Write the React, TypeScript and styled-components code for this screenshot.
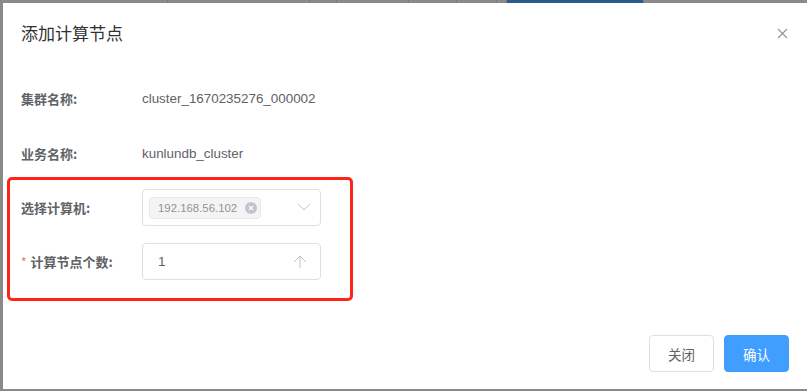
import React from "react";
import styled, { createGlobalStyle } from "styled-components";

const GlobalStyle = createGlobalStyle`
  html, body {
    margin: 0;
    padding: 0;
    background: #8a8a8a;
    font-family: "Liberation Sans", "Noto Sans CJK SC", sans-serif;
  }
`;

const Page = styled.div`
  position: relative;
  width: 807px;
  height: 391px;
  overflow: hidden;
  background: #8a8a8a;
`;

/* the page behind the overlay, only a thin strip of it shows */
const BackBar = styled.div`
  display: flex;
  height: 3px;
  padding-left: 167px;
`;

const BackCell = styled.div<{ $w: number; $active?: boolean }>`
  width: ${(p) => p.$w}px;
  height: 100%;
  border-left: 1px solid #7a7a7a;
  background: ${(p) => (p.$active ? "#2b5a8d" : "transparent")};
`;

const Dialog = styled.div`
  position: absolute;
  top: 3px;
  left: 3px;
  width: 806px;
  height: 386px;
  background: #fff;
  display: flex;
  flex-direction: column;
`;

const Header = styled.div`
  display: flex;
  align-items: center;
  justify-content: space-between;
  padding: 18px 21px 0 18px;
  height: 24px;
`;

const Title = styled.span`
  font-family: "Noto Sans CJK SC", sans-serif;
  font-size: 17px;
  line-height: 24px;
  color: #303133;
`;

const CloseBtn = styled.button`
  border: 0;
  background: none;
  padding: 0;
  width: 12px;
  height: 12px;
  display: flex;
  align-items: center;
  justify-content: center;
  cursor: pointer;
`;

const Body = styled.div`
  padding: 35px 20px 0 18px;
  display: flex;
  flex-direction: column;
  gap: 17.5px;
`;

const Group = styled.div`
  position: relative;
  display: flex;
  flex-direction: column;
  gap: 17px;

  &::after {
    content: "";
    position: absolute;
    top: -12px;
    left: -14px;
    width: 340px;
    height: 118px;
    border: 3px solid #ff2418;
    border-radius: 5px;
    pointer-events: none;
  }
`;

const Row = styled.div`
  display: flex;
  align-items: center;
  height: 37px;
`;

const Label = styled.label`
  width: 121px;
  flex-shrink: 0;
  font-family: "Noto Sans CJK SC", sans-serif;
  font-weight: 700;
  font-size: 13px;
  color: #606266;
  display: flex;
  align-items: center;
`;

const Star = styled.span`
  color: #f56c6c;
  font-weight: 400;
  margin-right: 4px;
  font-size: 12px;
`;

const Value = styled.span`
  font-size: 13.4px;
  color: #606266;
`;

const Field = styled.div`
  box-sizing: border-box;
  width: 179px;
  height: 37px;
  border: 1px solid #dcdfe6;
  border-radius: 4px;
  display: flex;
  align-items: center;
  padding: ${(p: { $pad: string }) => p.$pad};
`;

const Tag = styled.span`
  box-sizing: border-box;
  height: 22px;
  display: flex;
  align-items: center;
  gap: 8px;
  padding: 0 3px 0 8px;
  background: #f4f4f5;
  border: 1px solid #e9e9eb;
  border-radius: 4px;
  color: #909399;
  font-size: 11.4px;
`;

const TagClose = styled.span`
  width: 12px;
  height: 12px;
  border-radius: 50%;
  background: #c0c4cc;
  display: flex;
  align-items: center;
  justify-content: center;
`;

const Suffix = styled.span`
  margin-left: auto;
  display: flex;
  align-items: center;
`;

const InputText = styled.span`
  font-size: 13.5px;
  color: #606266;
`;

const Footer = styled.div`
  margin-top: auto;
  display: flex;
  justify-content: flex-end;
  gap: 10px;
  padding: 0 20px 17px;
`;

const Button = styled.button<{ $primary?: boolean }>`
  box-sizing: border-box;
  width: 65px;
  height: 37px;
  border-radius: 4px;
  border: 1px solid ${(p) => (p.$primary ? "#409eff" : "#dcdfe6")};
  background: ${(p) => (p.$primary ? "#409eff" : "#fff")};
  color: ${(p) => (p.$primary ? "#fff" : "#606266")};
  font-family: "Noto Sans CJK SC", sans-serif;
  font-size: 13.5px;
  cursor: pointer;
`;

export default function App() {
  return (
    <Page>
      <GlobalStyle />
      <BackBar>
        <BackCell $w={141} />
        <BackCell $w={26} />
        <BackCell $w={71} />
        <BackCell $w={47} />
        <BackCell $w={39} />
        <BackCell $w={9} />
        <BackCell $w={136} $active />
        <BackCell $w={100} />
      </BackBar>

      <Dialog>
        <Header>
          <Title>添加计算节点</Title>
          <CloseBtn aria-label="close">
            <svg width="11" height="11" viewBox="0 0 11 11">
              <path d="M1 1L10 10M10 1L1 10" stroke="#909399" strokeWidth="1.1" fill="none" />
            </svg>
          </CloseBtn>
        </Header>

        <Body>
          <Row>
            <Label>集群名称:</Label>
            <Value>cluster_1670235276_000002</Value>
          </Row>
          <Row>
            <Label>业务名称:</Label>
            <Value>kunlundb_cluster</Value>
          </Row>

          <Group>
            <Row>
              <Label>选择计算机:</Label>
              <Field $pad="0 10px 0 6px">
                <Tag>
                  192.168.56.102
                  <TagClose>
                    <svg width="6" height="6" viewBox="0 0 6 6">
                      <path d="M1 1L5 5M5 1L1 5" stroke="#fff" strokeWidth="1.1" fill="none" />
                    </svg>
                  </TagClose>
                </Tag>
                <Suffix>
                  <svg width="12" height="7" viewBox="0 0 12 7">
                    <polyline points="0.5,0.5 6,6 11.5,0.5" stroke="#c0c4cc" strokeWidth="1" fill="none" />
                  </svg>
                </Suffix>
              </Field>
            </Row>
            <Row>
              <Label>
                <Star>*</Star>计算节点个数:
              </Label>
              <Field $pad="0 13px 0 15px">
                <InputText>1</InputText>
                <Suffix>
                  <svg width="14" height="13" viewBox="0 0 14 13">
                    <path d="M7 1V13M1 7L7 1L13 7" stroke="#c0c4cc" strokeWidth="1" fill="none" />
                  </svg>
                </Suffix>
              </Field>
            </Row>
          </Group>
        </Body>

        <Footer>
          <Button>关闭</Button>
          <Button $primary>确认</Button>
        </Footer>
      </Dialog>
    </Page>
  );
}
